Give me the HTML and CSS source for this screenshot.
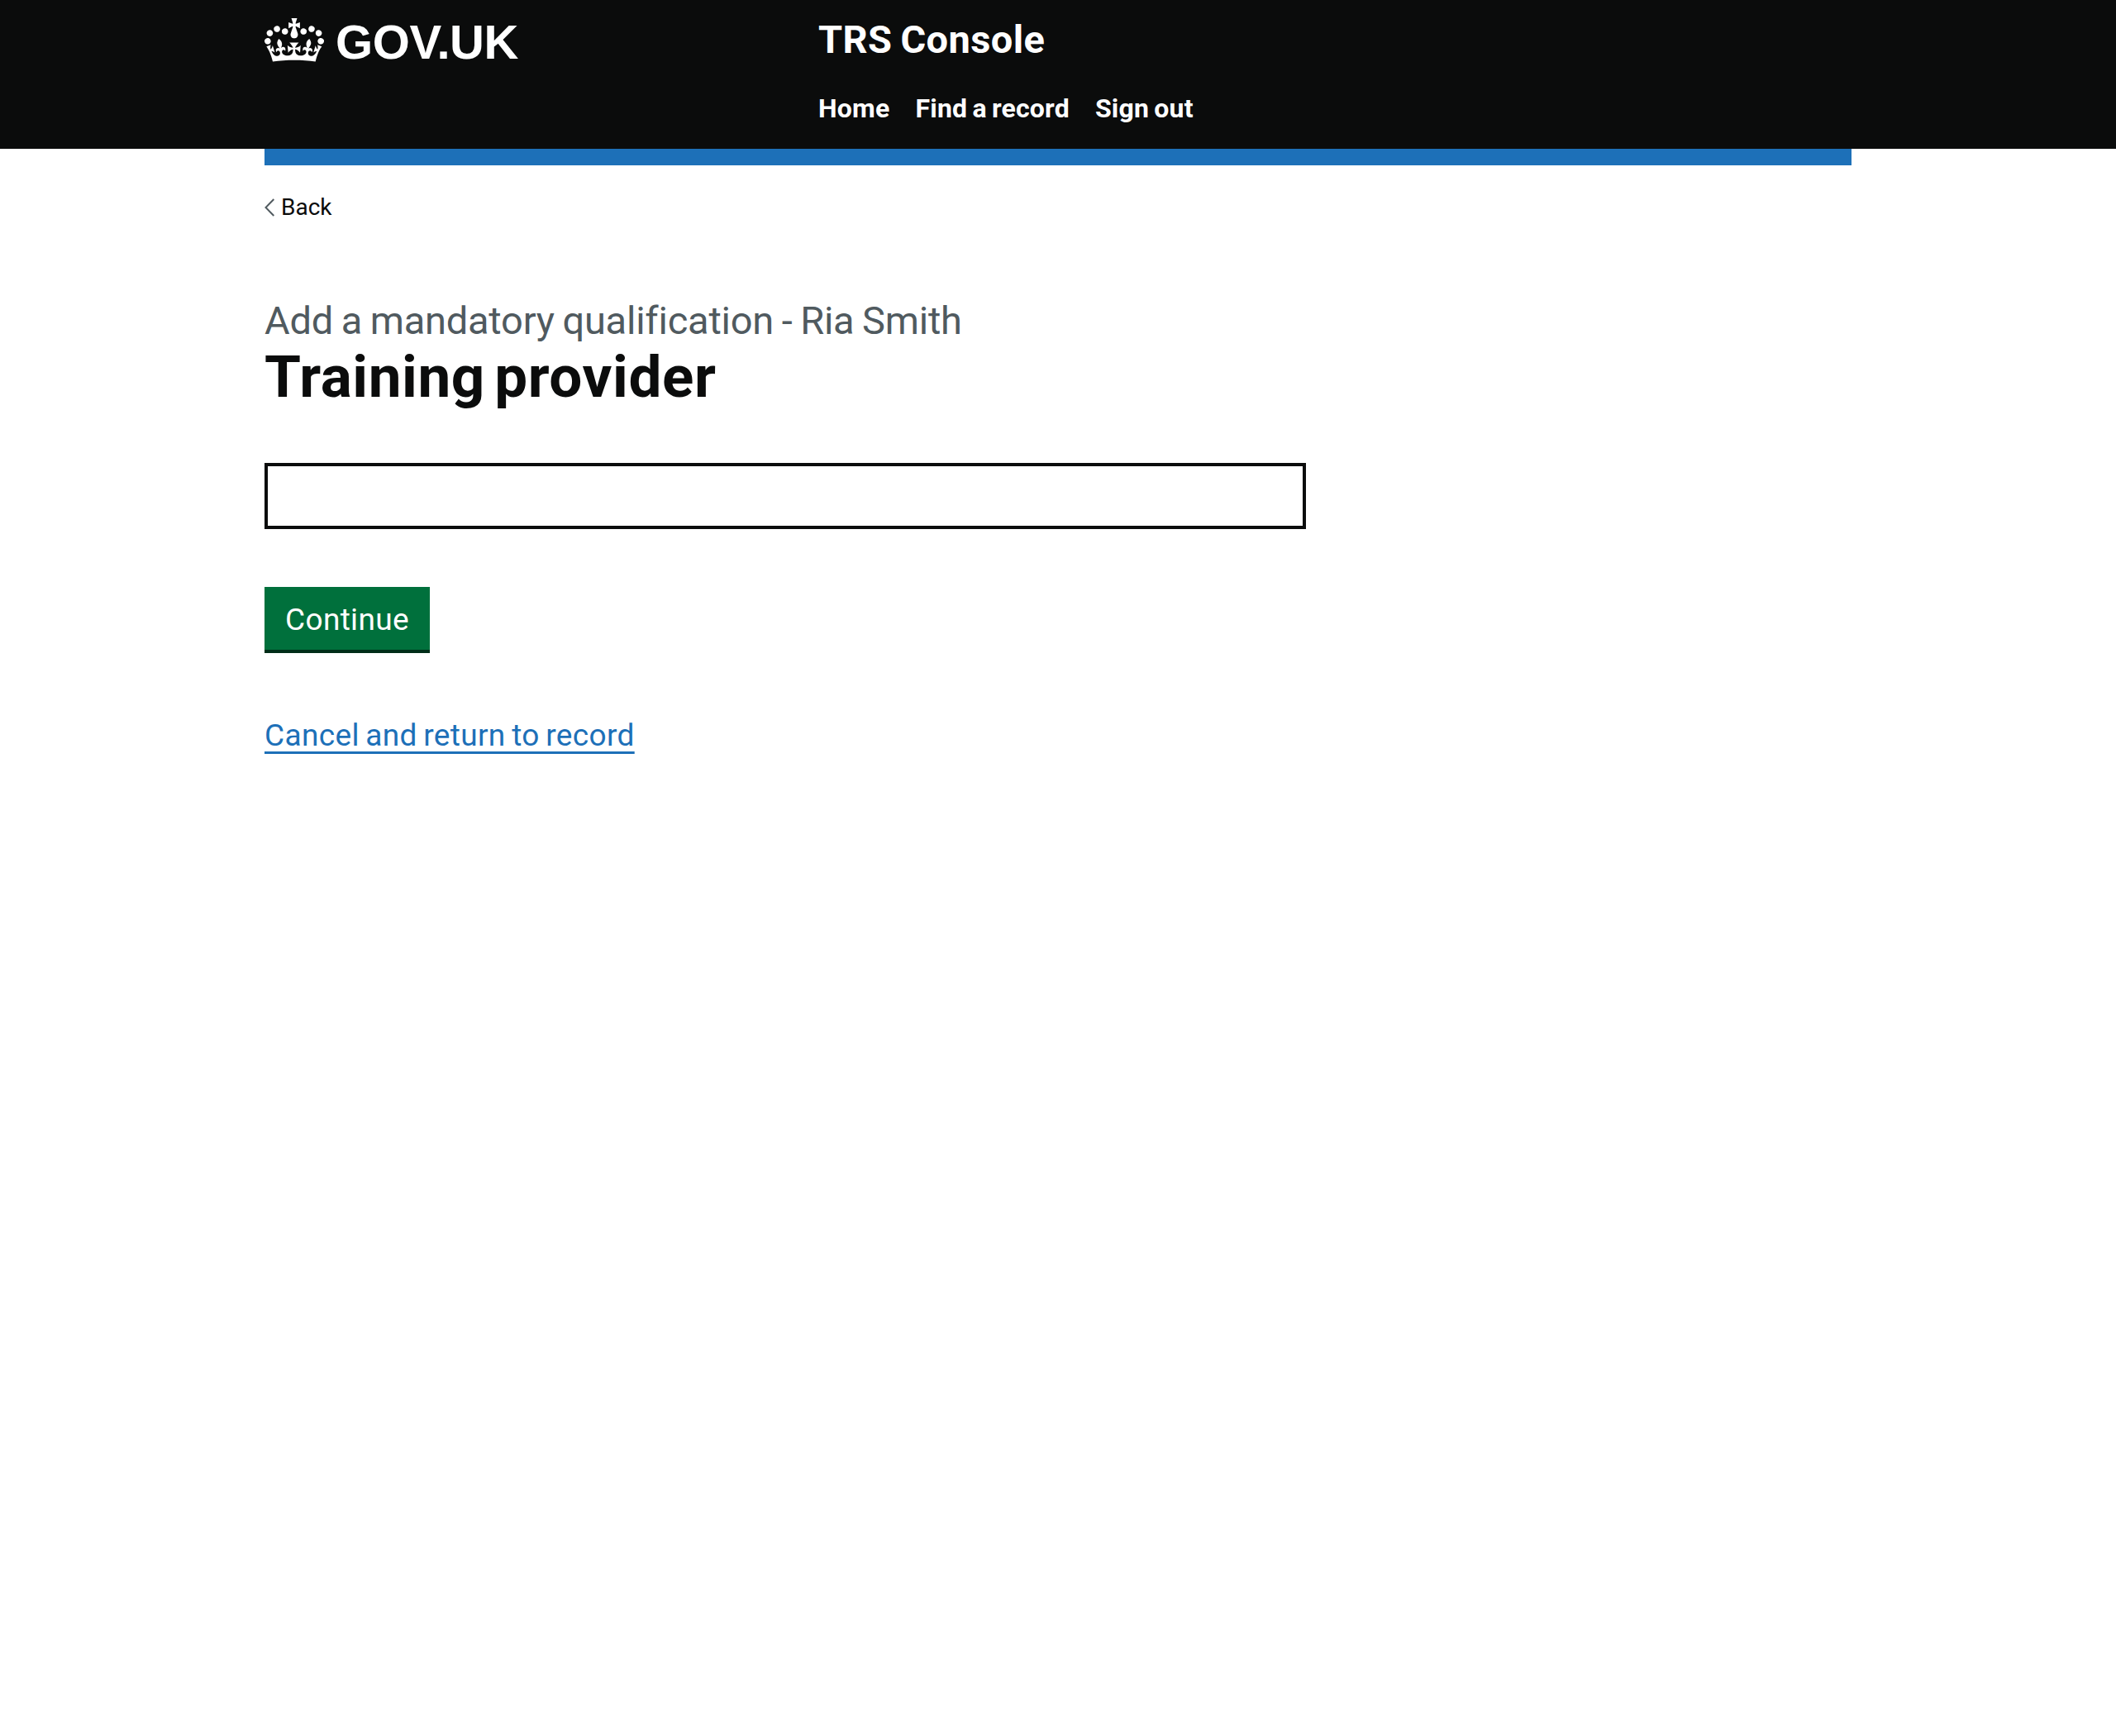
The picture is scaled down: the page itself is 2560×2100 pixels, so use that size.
FILE: index.html
```
<!DOCTYPE html>
<html lang="en">
<head>
<meta charset="utf-8">
<title>Training provider - TRS Console</title>
<link rel="stylesheet" href="styles.css">
</head>
<body>
<header class="header">
  <div class="container header-inner">
    <a class="logo" href="#">
      <svg class="crown" viewBox="0 0 132 97" aria-hidden="true"><path fill="currentColor" d="M25 30.2c3.5 1.5 7.7-.2 9.1-3.7 1.5-3.6-.2-7.8-3.9-9.2-3.6-1.4-7.6.3-9.1 3.9-1.4 3.5.3 7.5 3.9 9zM9 39.5c3.6 1.5 7.8-.2 9.2-3.7 1.5-3.6-.2-7.8-3.9-9.1-3.6-1.5-7.6.2-9.1 3.8-1.4 3.5.3 7.5 3.8 9zM4.4 57.2c3.5 1.5 7.7-.2 9.1-3.8 1.5-3.6-.2-7.7-3.9-9.1-3.5-1.5-7.6.3-9.1 3.8-1.4 3.5.3 7.6 3.9 9.1zm38.3-21.4c3.5 1.5 7.7-.2 9.1-3.8 1.5-3.6-.2-7.7-3.9-9.1-3.6-1.5-7.6.3-9.1 3.8-1.3 3.6.4 7.7 3.9 9.1zm64.4-5.6c-3.6 1.5-7.8-.2-9.1-3.7-1.5-3.6.2-7.8 3.8-9.2 3.6-1.4 7.7.3 9.2 3.9 1.3 3.5-.4 7.5-3.9 9zm15.9 9.3c-3.6 1.5-7.7-.2-9.1-3.7-1.5-3.6.2-7.8 3.7-9.1 3.6-1.5 7.7.2 9.2 3.8 1.5 3.5-.3 7.5-3.8 9zm4.7 17.7c-3.6 1.5-7.8-.2-9.2-3.8-1.5-3.6.2-7.7 3.9-9.1 3.6-1.5 7.7.3 9.2 3.8 1.3 3.5-.4 7.6-3.9 9.1zM89.3 35.8c-3.6 1.5-7.8-.2-9.2-3.8-1.4-3.6.2-7.7 3.9-9.1 3.6-1.5 7.7.3 9.2 3.8 1.4 3.6-.3 7.7-3.9 9.1zM69.7 17.7l8.9 4.7V9.3l-8.9 2.8c-.2-.3-.5-.6-.9-.9L72.4 0H59.6l3.5 11.2c-.3.3-.6.5-.9.9l-8.8-2.8v13.1l8.8-4.7c.3.3.6.7.9.9l-5 15.4v.1c-.2.8-.4 1.6-.4 2.4 0 4.1 3.1 7.5 7 8.1h.2c.3 0 .7.1 1 .1.4 0 .7 0 1-.1h.2c4-.6 7.1-4.1 7.1-8.1 0-.8-.1-1.7-.4-2.4V34l-5.1-15.4c.4-.2.7-.6 1-.9zM66 92.8c16.9 0 32.8 1.1 47.1 3.2 4-16.9 8.9-26.7 14-33.5l-9.6-3.4c1 4.9 1.1 7.2 0 10.2-1.5-1.4-3-4.3-4.2-8.7L108.6 76c2.8-2 5-3.2 7.5-3.3-4.4 9.4-10 11.9-13.6 11.2-4.3-.8-6.3-4.6-5.6-7.9 1-4.7 5.7-5.9 8-.5 4.3-8.7-3-11.4-7.6-8.8 7.1-7.2 7.9-13.5 2.1-21.1-8 6.1-8.1 12.3-4.5 20.8-4.7-5.4-12.1-2.5-9.5 6.2 3.4-5.2 7.9-2 7.2 3.1-.6 4.3-6.4 7.8-13.5 7.2-10.3-.9-10.9-8-11.2-13.8 2.5-.5 7.1 1.8 11 7.3L80.2 60c-4.1 4.4-8 5.3-12.3 5.4 1.4-4.4 8-11.6 8-11.6H55.5s6.4 7.2 7.9 11.6c-4.2-.1-8-1-12.3-5.4l1.4 16.4c3.9-5.5 8.5-7.7 10.9-7.3-.3 5.8-.9 12.8-11.1 13.8-7.2.6-12.9-2.9-13.5-7.2-.7-5 3.8-8.3 7.1-3.1 2.7-8.7-4.6-11.6-9.4-6.2 3.7-8.5 3.6-14.7-4.6-20.8-5.8 7.6-5 13.9 2.2 21.1-4.7-2.6-11.9.1-7.7 8.8 2.3-5.5 7.1-4.2 8.1.5.7 3.3-1.3 7.1-5.7 7.9-3.5.7-9-1.8-13.5-11.2 2.5.1 4.7 1.3 7.5 3.3l-4.7-15.4c-1.2 4.4-2.7 7.2-4.3 8.7-1.1-3-.9-5.3 0-10.2l-9.5 3.4c5 6.9 9.9 16.7 14 33.5 14.8-2.1 30.8-3.2 47.7-3.2z"/></svg>
      <span class="wordmark">GOV.UK</span>
    </a>
    <div class="header-content">
      <a class="service" href="#">TRS Console</a>
      <nav class="nav">
        <a href="#">Home</a>
        <a href="#">Find a record</a>
        <a href="#">Sign out</a>
      </nav>
    </div>
  </div>
</header>
<div class="container">
  <div class="bar"></div>
  <a class="back" href="#">
    <svg class="chevron" viewBox="0 0 12 22" aria-hidden="true"><path d="M11.3 1 1.5 11l9.8 10" fill="none" stroke="#505a5f" stroke-width="2"/></svg>
    Back
  </a>
  <main class="main">
    <span class="caption">Add a mandatory qualification - Ria Smith</span>
    <h1 class="heading">Training provider</h1>
    <input class="input" type="text" aria-label="Training provider">
    <button class="button" type="button">Continue</button>
    <a class="cancel" href="#">Cancel and return to record</a>
  </main>
</div>
</body>
</html>
```
FILE: styles.css
```
body {
  margin: 0;
  background: #fff;
  color: #0b0c0c;
  font-family: Roboto, "Liberation Sans", sans-serif;
}

a {
  color: inherit;
  text-decoration: none;
  white-space: nowrap;
}

.container {
  width: 1920px;
  margin: 0 auto;
}

.header {
  height: 180px;
  background: #0b0c0c;
  color: #fff;
}

.header-inner {
  display: grid;
  grid-template-columns: 670px 1fr;
}

.logo {
  display: flex;
  align-items: flex-start;
  gap: 14px;
  padding-top: 22px;
}

.crown {
  width: 72px;
  height: 53px;
}

.wordmark {
  font: bold 58px/58px "Liberation Sans", Arial, sans-serif;
  letter-spacing: -0.4px;
}

.header-content {
  padding-top: 23px;
}

.service {
  display: block;
  margin-bottom: 38px;
  font-size: 47px;
  font-weight: 700;
  line-height: 50px;
  letter-spacing: 0.4px;
  word-spacing: -2px;
}

.nav {
  display: flex;
  gap: 31px;
  font-size: 32px;
  font-weight: 700;
  line-height: 40px;
  letter-spacing: 0.2px;
  word-spacing: -2px;
}

.bar {
  height: 20px;
  background: #1d70b8;
}

.back {
  display: flex;
  align-items: center;
  gap: 8px;
  margin-top: 31px;
  font-size: 28px;
  line-height: 40px;
}

.chevron {
  width: 12px;
  height: 22px;
}

.main {
  display: flex;
  flex-direction: column;
  align-items: flex-start;
  padding-top: 87px;
}

.caption {
  color: #505a5f;
  font-size: 47px;
  line-height: 60px;
  letter-spacing: -0.22px;
  word-spacing: -1.8px;
  white-space: nowrap;
}

.heading {
  margin: 0 0 66px;
  font-size: 71px;
  font-weight: 700;
  line-height: 76px;
  letter-spacing: 0.6px;
  word-spacing: -7px;
}

.input {
  box-sizing: border-box;
  width: 1260px;
  height: 80px;
  margin: 0 0 70px;
  padding: 10px;
  border: 4px solid #0b0c0c;
  border-radius: 0;
  background: #fff;
  font: inherit;
}

.button {
  box-sizing: border-box;
  width: 200px;
  height: 80px;
  margin: 0 0 75px;
  padding: 3px 0 0;
  border: 0;
  border-bottom: 4px solid #002d18;
  border-radius: 0;
  background: #00703c;
  color: #fff;
  font-family: inherit;
  font-size: 37px;
  line-height: 73px;
  letter-spacing: 0.35px;
}

.cancel {
  color: #1d70b8;
  font-size: 37px;
  line-height: 50px;
  letter-spacing: 0.35px;
  word-spacing: -2px;
  text-decoration: underline;
  text-decoration-thickness: 3px;
  text-decoration-skip-ink: none;
  text-underline-offset: 7px;
}
```
